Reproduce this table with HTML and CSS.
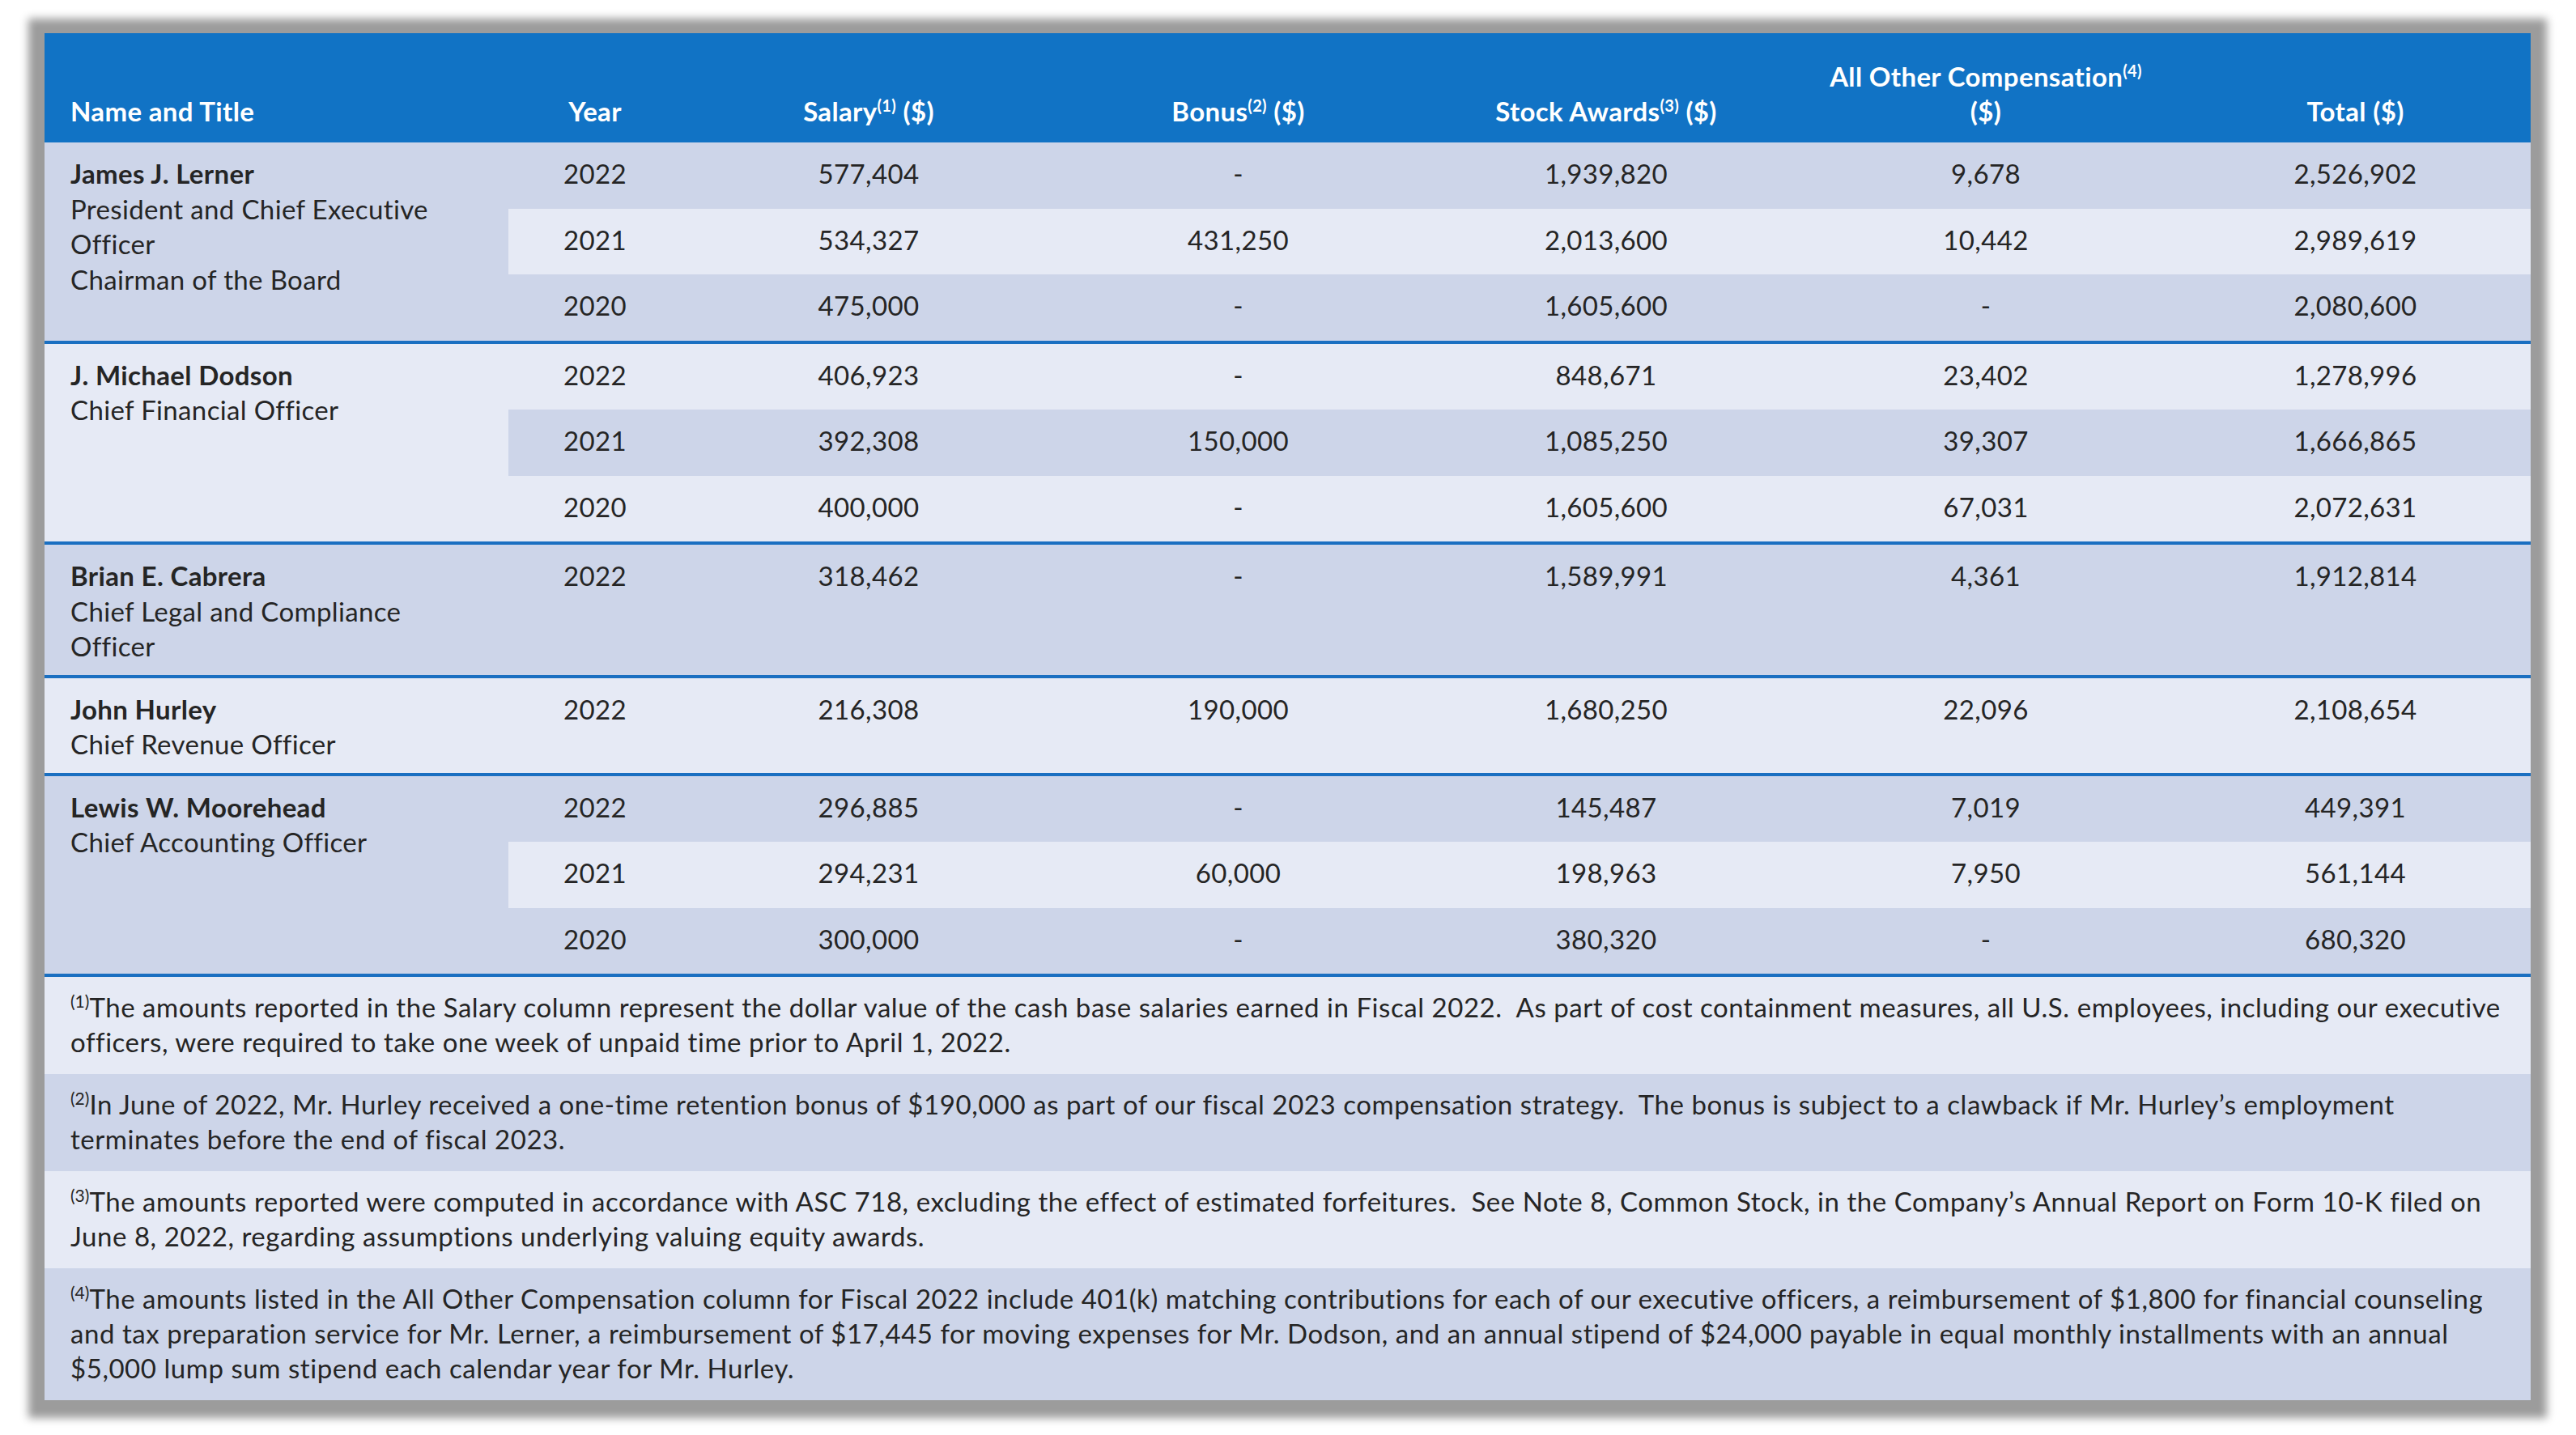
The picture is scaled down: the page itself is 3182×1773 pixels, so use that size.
FILE: index.html
```html
<!DOCTYPE html>
<html>
<head>
    <title>Summary Compensation Table</title>
    <link rel="stylesheet" href="styles.css">
</head>
<body>
    <div class="page">
        <div class="comp-table">
            <div class="head">
                <div class="head-name">Name and Title</div>
                <div>Year</div>
                <div>Salary<sup>(1)</sup> ($)</div>
                <div>Bonus<sup>(2)</sup> ($)</div>
                <div>Stock Awards<sup>(3)</sup> ($)</div>
                <div>All Other Compensation<sup>(4)</sup><br>($)</div>
                <div>Total ($)</div>
            </div>

            <div class="group dark">
                <div class="who">
                    <b>James J. Lerner</b><br>
                    President and Chief Executive<br>Officer<br>
                    Chairman of the Board
                </div>
                <div class="years">
                    <div class="yr"><div>2022</div><div>577,404</div><div>-</div><div>1,939,820</div><div>9,678</div><div>2,526,902</div></div>
                    <div class="yr alt"><div>2021</div><div>534,327</div><div>431,250</div><div>2,013,600</div><div>10,442</div><div>2,989,619</div></div>
                    <div class="yr"><div>2020</div><div>475,000</div><div>-</div><div>1,605,600</div><div>-</div><div>2,080,600</div></div>
                </div>
            </div>

            <div class="group light">
                <div class="who">
                    <b>J. Michael Dodson</b><br>
                    Chief Financial Officer
                </div>
                <div class="years">
                    <div class="yr"><div>2022</div><div>406,923</div><div>-</div><div>848,671</div><div>23,402</div><div>1,278,996</div></div>
                    <div class="yr alt"><div>2021</div><div>392,308</div><div>150,000</div><div>1,085,250</div><div>39,307</div><div>1,666,865</div></div>
                    <div class="yr"><div>2020</div><div>400,000</div><div>-</div><div>1,605,600</div><div>67,031</div><div>2,072,631</div></div>
                </div>
            </div>

            <div class="group dark">
                <div class="who">
                    <b>Brian E. Cabrera</b><br>
                    Chief Legal and Compliance<br>Officer
                </div>
                <div class="years">
                    <div class="yr"><div>2022</div><div>318,462</div><div>-</div><div>1,589,991</div><div>4,361</div><div>1,912,814</div></div>
                </div>
            </div>

            <div class="group light">
                <div class="who">
                    <b>John Hurley</b><br>
                    Chief Revenue Officer
                </div>
                <div class="years">
                    <div class="yr"><div>2022</div><div>216,308</div><div>190,000</div><div>1,680,250</div><div>22,096</div><div>2,108,654</div></div>
                </div>
            </div>

            <div class="group dark">
                <div class="who">
                    <b>Lewis W. Moorehead</b><br>
                    Chief Accounting Officer
                </div>
                <div class="years">
                    <div class="yr"><div>2022</div><div>296,885</div><div>-</div><div>145,487</div><div>7,019</div><div>449,391</div></div>
                    <div class="yr alt"><div>2021</div><div>294,231</div><div>60,000</div><div>198,963</div><div>7,950</div><div>561,144</div></div>
                    <div class="yr"><div>2020</div><div>300,000</div><div>-</div><div>380,320</div><div>-</div><div>680,320</div></div>
                </div>
            </div>

            <div class="note light">
                <span class="line"><sup>(1)</sup>The amounts reported in the Salary column represent the dollar value of the cash base salaries earned in Fiscal 2022.&nbsp; As part of cost containment measures, all U.S. employees, including our executive</span>
                <span class="line">officers, were required to take one week of unpaid time prior to April 1, 2022.</span>
            </div>
            <div class="note dark">
                <span class="line"><sup>(2)</sup>In June of 2022, Mr. Hurley received a one-time retention bonus of $190,000 as part of our fiscal 2023 compensation strategy.&nbsp; The bonus is subject to a clawback if Mr. Hurley’s employment</span>
                <span class="line">terminates before the end of fiscal 2023.</span>
            </div>
            <div class="note light">
                <span class="line"><sup>(3)</sup>The amounts reported were computed in accordance with ASC 718, excluding the effect of estimated forfeitures.&nbsp; See Note 8, Common Stock, in the Company’s Annual Report on Form 10-K filed on</span>
                <span class="line">June 8, 2022, regarding assumptions underlying valuing equity awards.</span>
            </div>
            <div class="note dark">
                <span class="line"><sup>(4)</sup>The amounts listed in the All Other Compensation column for Fiscal 2022 include 401(k) matching contributions for each of our executive officers, a reimbursement of $1,800 for financial counseling</span>
                <span class="line">and tax preparation service for Mr. Lerner, a reimbursement of $17,445 for moving expenses for Mr. Dodson, and an annual stipend of $24,000 payable in equal monthly installments with an annual</span>
                <span class="line">$5,000 lump sum stipend each calendar year for Mr. Hurley.</span>
            </div>
        </div>
    </div>
</body>
</html>
```

FILE: styles.css
```css
body {
    margin: 0;
    background-color: #fff;
    font-family: Lato, "Open Sans", sans-serif;
    font-size: 33px;
    letter-spacing: 0.35px;
    color: #252525;
}
.page {
    padding: 41px 56px 40px 55px;
}
.comp-table {
    background-color: #e6eaf5;
    box-shadow: 0 2px 10px 20px #9c9c9c;
}
.head {
    display: grid;
    grid-template-columns: 573px 214px 462px 451px 458px 480px 433px;
    align-items: end;
    height: 135px;
    box-sizing: border-box;
    padding-bottom: 17px;
    background-color: #1173c5;
    color: #fff;
    font-weight: bold;
    line-height: 43px;
    text-align: center;
}
.head-name {
    padding-left: 32px;
    text-align: left;
}
sup {
    font-size: 20px;
    line-height: 0;
    vertical-align: 12px;
}
.group {
    display: flex;
    border-bottom: 4px solid #1a6fc1;
}
.dark {
    background-color: #cdd5e9;
}
.light {
    background-color: #e6eaf5;
}
.who {
    width: 573px;
    flex-shrink: 0;
    box-sizing: border-box;
    padding: 17px 20px 13px 32px;
    line-height: 43.5px;
    text-align: left;
}
.who b {
    font-weight: bold;
}
.years {
    flex: 1;
}
.yr {
    display: grid;
    grid-template-columns: 214px 462px 451px 458px 480px 433px;
    height: 81.5px;
    box-sizing: border-box;
    padding-top: 17px;
    line-height: 43.5px;
    text-align: center;
}
.dark .yr.alt {
    background-color: #e6eaf5;
}
.light .yr.alt {
    background-color: #cdd5e9;
}
.note {
    padding: 16px 30px 18px 32px;
    line-height: 43px;
    letter-spacing: 0.55px;
}
.note .line {
    display: block;
    white-space: nowrap;
}
.note sup {
    font-size: 21px;
    letter-spacing: 0;
    vertical-align: 12px;
}
```
